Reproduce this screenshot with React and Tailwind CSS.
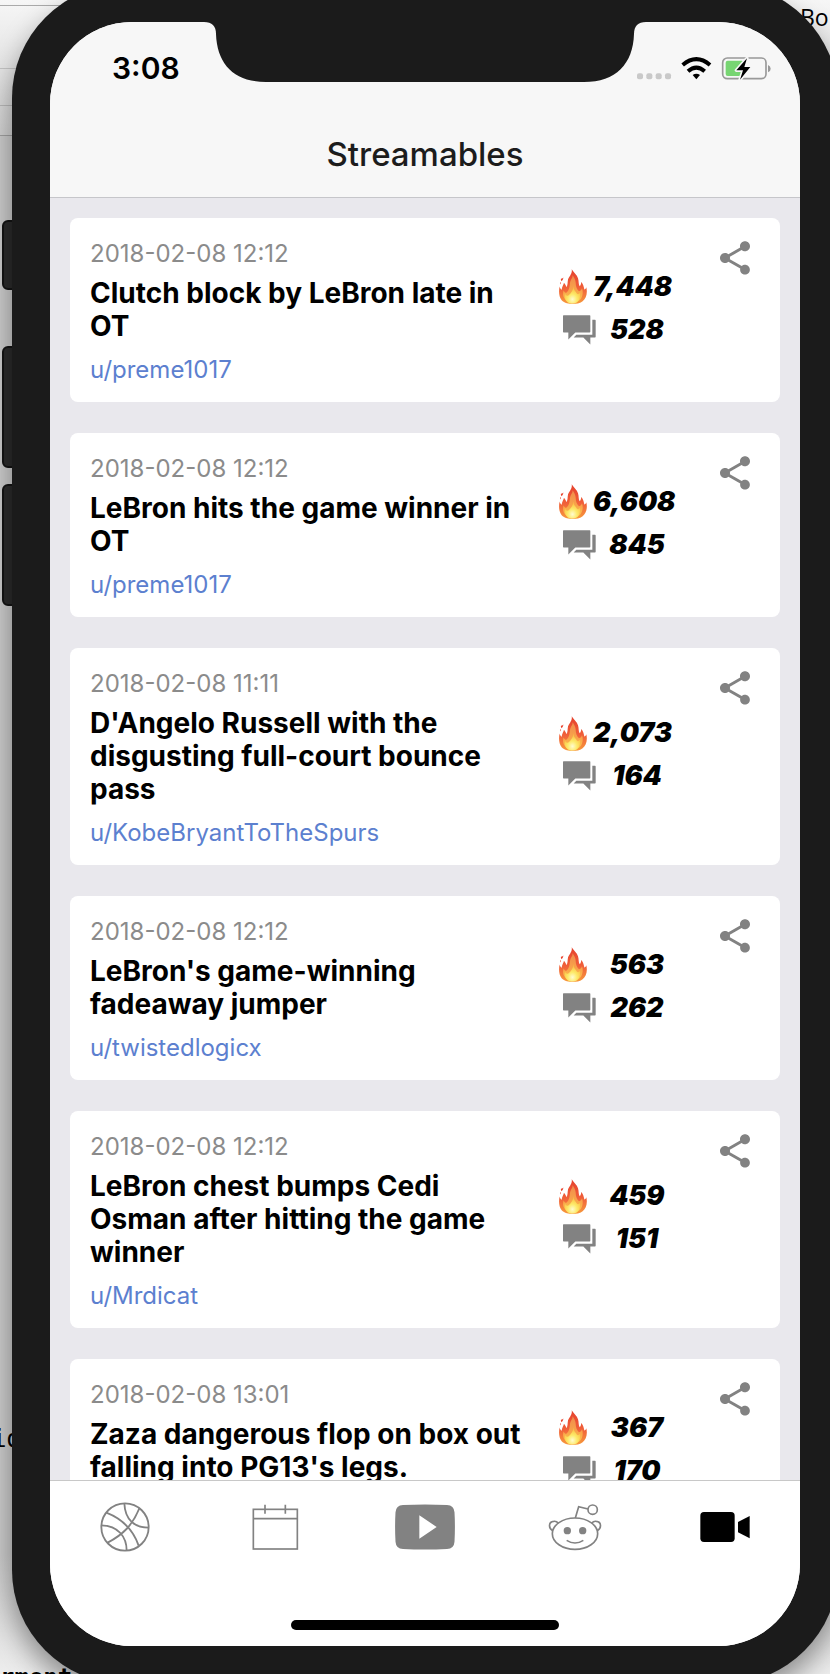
import React from "react";
import { MdShare } from "react-icons/md";

const posts = [
  { date: "2018-02-08 12:12", title: "Clutch block by LeBron late in OT", user: "u/preme1017", ups: "7,448", comments: "528" },
  { date: "2018-02-08 12:12", title: "LeBron hits the game winner in OT", user: "u/preme1017", ups: "6,608", comments: "845" },
  { date: "2018-02-08 11:11", title: "D'Angelo Russell with the disgusting full-court bounce pass", user: "u/KobeBryantToTheSpurs", ups: "2,073", comments: "164" },
  { date: "2018-02-08 12:12", title: "LeBron's game-winning fadeaway jumper", user: "u/twistedlogicx", ups: "563", comments: "262" },
  { date: "2018-02-08 12:12", title: "LeBron chest bumps Cedi Osman after hitting the game winner", user: "u/Mrdicat", ups: "459", comments: "151" },
  { date: "2018-02-08 13:01", title: "Zaza dangerous flop on box out falling into PG13's legs.", user: "", ups: "367", comments: "170" },
];

function Fire() {
  return (
    <svg viewBox="0 0 84 104" className="h-[35px] w-7 shrink-0" aria-hidden="true">
      <defs>
        <linearGradient id="flameOuter" x1="0" y1="0" x2="0" y2="1">
          <stop offset="0" stopColor="#e5402c" />
          <stop offset="0.55" stopColor="#f0603a" />
          <stop offset="1" stopColor="#f79a3c" />
        </linearGradient>
        <linearGradient id="flameMid" x1="0" y1="0" x2="0" y2="1">
          <stop offset="0" stopColor="#f08a4c" />
          <stop offset="0.6" stopColor="#f9a64a" />
          <stop offset="1" stopColor="#fbc94f" />
        </linearGradient>
        <radialGradient id="flameCore" cx="0.5" cy="0.75" r="0.6">
          <stop offset="0" stopColor="#fffbd0" />
          <stop offset="0.5" stopColor="#fdea6a" />
          <stop offset="1" stopColor="#fbc648" />
        </radialGradient>
      </defs>
      <path fill="url(#flameOuter)" d="M38 0C44 10 54 16 57 27C60 36 58 45 62 51C66 48 67 42 66 38C74 46 74 54 76 61C79 60 81 57 82 54C86 72 82 88 70 97C62 103 52 104 42 104C30 104 16 102 8 93C-1 82 -1 64 2 52C3 57 5 60 8 62C9 54 13 48 15 41C19 46 21 50 22 54C27 48 25 40 27 31C30 21 41 14 38 0Z" />
      <path fill="url(#flameMid)" d="M41 18C45 26 50 31 50 41C50 52 54 62 60 66C66 64 68 60 69 57C74 72 70 86 60 95C52 102 32 102 22 94C11 85 11 72 14 64C16 68 18 71 22 71C31 64 32 52 33 41C34 31 41 28 41 18Z" />
      <path fill="url(#flameCore)" d="M43 52C43 62 50 66 54 74C57 77 61 74 63 71C65 84 60 96 52 101C45 104 33 104 27 100C18 94 16 84 18 74C20 79 24 81 28 79C36 72 43 64 43 52Z" />
      <path fill="#e8432e" d="M13 25C13 31 10 33 8 36C6 34 5 31 6 28C9 29 11 28 13 25ZM5 38C6 41 6 43 5 46C3 44 3 41 5 38Z" />
    </svg>
  );
}

function Comments() {
  return (
    <svg viewBox="0 0 99 89" className="ml-1 h-[30px] w-[33px] shrink-0 fill-[#828282]" aria-hidden="true">
      <path d="M2 0H80Q82 0 82 2V50Q82 52 80 52H37L16 73V52H2Q0 52 0 50V2Q0 0 2 0Z" />
      <path d="M88 14H96Q98 14 98 16V65Q98 67 96 67H82V88L61 67H32L40 59H88Z" />
    </svg>
  );
}

function Stat({ icon, value, label }) {
  return (
    <div className="flex h-[43px] items-center" aria-label={label}>
      <div className="flex w-[34px] shrink-0">{icon}</div>
      <span className={value.length > 3 ? "w-[88px] text-left" : "w-[88px] text-center"}>{value}</span>
    </div>
  );
}

function Card({ post }) {
  return (
    <article className="flex shrink-0 rounded-lg bg-white pl-5">
      <div className="min-w-0 flex-1 pt-[21px] pb-4">
        <time className="block text-[24px] leading-[30px] text-[#8b8b8b]">{post.date}</time>
        <h2 className="mt-2 text-[28px] leading-[33px] font-bold text-black">{post.title}</h2>
        <a href="#user" className="mt-[11px] block h-8 text-[24px] leading-[32px] text-[#5c80cf]">{post.user}</a>
      </div>
      <div className="flex w-[150px] shrink-0 flex-col justify-center pb-1 pl-[26px] text-[27px] leading-[34px] font-black text-black italic">
        <Stat icon={<Fire />} value={post.ups} label="Upvotes" />
        <Stat icon={<Comments />} value={post.comments} label="Comments" />
      </div>
      <div className="flex w-[97px] shrink-0 items-start justify-end pt-5 pr-[25px]">
        <button type="button" aria-label="Share" className="text-[#828282]">
          <MdShare size={40} />
        </button>
      </div>
    </article>
  );
}

const tabs = [
  {
    name: "Games",
    icon: (
      <g fill="none" stroke="#828282" strokeWidth="5.5">
        <circle r="71" />
        <path d="M-2 -71C0 -20 30 2 71 2M43 -56C22 -5 -5 22 -52 47M-56 -43C-10 -25 25 10 41 56M-71 -5C-20 -4 5 30 5 71" />
      </g>
    ),
  },
  {
    name: "Schedule",
    icon: (
      <g fill="none" stroke="#828282" strokeWidth="5">
        <rect x="-65" y="-53" width="132" height="119" />
        <path d="M-65 -25H67M-30 -67V-40M31 -67V-40" />
      </g>
    ),
  },
  {
    name: "Highlights",
    icon: (
      <path fill="#828282" fillRule="evenodd" d="M-66 -66Q0 -69 66 -66Q87 -65 88.500 -44Q91 0 88.500 44Q87 65 66 66Q0 69 -66 66Q-87 65 -88.500 44Q-91 0 -88.500 -44Q-87 -65 -66 -66ZM-17 -35V35L35 0Z" />
    ),
  },
  {
    name: "Reddit",
    icon: (
      <g fill="none" stroke="#828282" strokeWidth="5">
        <ellipse cy="20" rx="68" ry="47" />
        <path d="M1 -27L11 -61L39 -54M-67 11C-80 4 -80 -16 -64 -17C-58 -18 -53 -15 -50 -11M67 11C80 4 80 -16 64 -17C58 -18 53 -15 50 -11M-25 40Q0 56 25 40" />
        <circle cx="53" cy="-52" r="14" />
        <circle cx="-23" cy="11" r="11" fill="#828282" stroke="none" />
        <circle cx="23" cy="11" r="11" fill="#828282" stroke="none" />
      </g>
    ),
  },
  {
    name: "Streamables",
    icon: (
      <g fill="#000">
        <rect x="-74" y="-45" width="103" height="90" rx="11" />
        <path d="M74 -33V34L39 16V-15Z" />
      </g>
    ),
  },
];

function StatusIcons() {
  return (
    <svg viewBox="0 0 402 69" className="h-[23px] w-[134px]" aria-label="Wi-Fi on, battery charging">
      <g fill="#c9c9c9">
        <rect x="0" y="49" width="18" height="18" rx="6" />
        <rect x="28" y="49" width="18" height="18" rx="6" />
        <rect x="56" y="49" width="18" height="18" rx="6" />
        <rect x="84" y="49" width="18" height="18" rx="6" />
      </g>
      <g fill="none" stroke="#000" strokeWidth="12">
        <path d="M137 24Q178 -11 219 24" />
        <path d="M153 43Q178 21 203 43" />
      </g>
      <path d="M167 54Q178 46 189 54L178 67Z" />
      <rect x="257" y="3" width="130" height="62" rx="14" fill="none" stroke="#999999" strokeWidth="5" />
      <path d="M393 24Q401 27 401 35Q401 43 393 46Z" fill="#999999" />
      <rect x="266" y="11" width="54" height="46" rx="6" fill="#77d572" />
      <path d="M330 4L298 40H318L309 68L340 30H322Z" fill="#000" stroke="#f7f7f7" strokeWidth="10" strokeLinejoin="round" paintOrder="stroke" />
    </svg>
  );
}

export default function App() {
  return (
    <div className="relative h-screen overflow-hidden bg-[#cccccc] font-[Inter,sans-serif]">
      <div className="absolute inset-x-0 top-0 h-[136px] border-b border-[#a0a0a0] bg-linear-to-b from-[#f6f6f6] to-[#d2d2d2]" />
      <div className="absolute inset-x-0 bottom-0 h-[120px] bg-linear-to-b from-[#cccccc] to-[#ededed]" />
      <div className="absolute top-[5px] left-0 h-px w-20 bg-[#aaaaaa]" />
      <div className="absolute top-[68px] left-0 h-px w-4 bg-[#c2c2c2]" />
      <div className="absolute top-[105px] left-0 h-px w-4 bg-[#b8b8b8]" />
      <span className="absolute top-[4px] left-[800px] font-['Open_Sans'] text-[23px] leading-[26px] text-black">Bo</span>
      <span className="absolute top-[1425px] left-[-8px] font-['DejaVu_Sans_Mono'] text-[24px] leading-[28px] text-black">id</span>
      <span className="absolute top-[1664px] left-0 font-['DejaVu_Sans_Mono'] text-[24px] leading-[28px] font-bold text-black">rment</span>

      <div className="absolute top-[220px] left-[2px] h-[70px] w-4 rounded-l-md border-2 border-[#141414] bg-[#2b2b2b]" />
      <div className="absolute top-[346px] left-[2px] h-[122px] w-4 rounded-l-md border-2 border-[#141414] bg-[#2b2b2b]" />
      <div className="absolute top-[484px] left-[2px] h-[122px] w-4 rounded-l-md border-2 border-[#141414] bg-[#2b2b2b]" />

      <div className="absolute -top-4 -right-2 -bottom-[10px] left-3 flex rounded-[114px] bg-[#1b1b1b] p-[38px] shadow-[0_14px_28px_rgba(0,0,0,0.4)]">
        <main className="relative flex min-w-0 flex-1 flex-col overflow-hidden rounded-[82px] bg-white">
          <svg viewBox="0 0 442 60" className="absolute top-0 left-1/2 h-[60px] w-[442px] -translate-x-1/2 fill-[#1b1b1b]" aria-hidden="true">
            <path d="M0 0C8 0 12 4 12 12C13 42 30 60 62 60H380C412 60 429 42 430 12C430 4 434 0 442 0Z" />
          </svg>
          <header className="shrink-0 border-b border-[#c6c6ca] bg-[#f7f7f7]">
            <div className="flex h-[92px] items-center justify-between pr-[29px] pl-[62px]">
              <span className="text-[30px] leading-[36px] font-semibold text-black">3:08</span>
              <StatusIcons />
            </div>
            <h1 className="h-[83px] pt-[18px] text-center text-[33px] leading-[44px] font-medium text-[#1c1c1c]">Streamables</h1>
          </header>
          <section className="flex min-h-0 flex-1 flex-col gap-[31px] overflow-hidden bg-[#e9e8ed] px-5 pt-5">
            {posts.map((p) => (
              <Card key={p.title} post={p} />
            ))}
          </section>
          <nav className="shrink-0 border-t border-[#c8c8c8] bg-white pb-4">
            <div className="grid h-[139px] grid-cols-5">
              {tabs.map((t) => (
                <button key={t.name} type="button" aria-label={t.name} className="flex items-start justify-center pt-4">
                  <svg viewBox="-90 -90 180 180" className="h-[60px] w-[60px]">{t.icon}</svg>
                </button>
              ))}
            </div>
            <div className="mx-auto h-[10px] w-[268px] rounded-full bg-black" />
          </nav>
        </main>
      </div>
    </div>
  );
}
